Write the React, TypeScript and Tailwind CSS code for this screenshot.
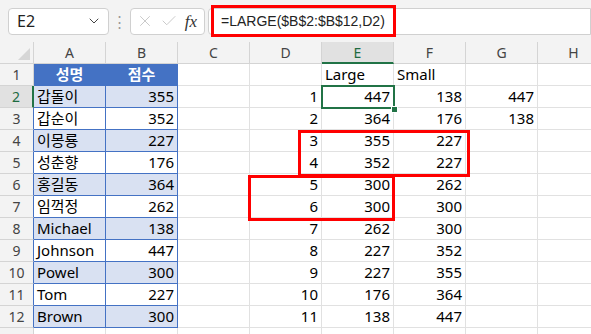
import { ChevronDown, X, Check } from "lucide-react";

const rows = [
  { n: 1, a: "성명", b: "점수", d: "", e: "Large", f: "Small", g: "" },
  { n: 2, a: "갑돌이", b: "355", d: "1", e: "447", f: "138", g: "447" },
  { n: 3, a: "갑순이", b: "352", d: "2", e: "364", f: "176", g: "138" },
  { n: 4, a: "이몽룡", b: "227", d: "3", e: "355", f: "227", g: "" },
  { n: 5, a: "성춘향", b: "176", d: "4", e: "352", f: "227", g: "" },
  { n: 6, a: "홍길동", b: "364", d: "5", e: "300", f: "262", g: "" },
  { n: 7, a: "임꺽정", b: "262", d: "6", e: "300", f: "300", g: "" },
  { n: 8, a: "Michael", b: "138", d: "7", e: "262", f: "300", g: "" },
  { n: 9, a: "Johnson", b: "447", d: "8", e: "227", f: "352", g: "" },
  { n: 10, a: "Powel", b: "300", d: "9", e: "227", f: "355", g: "" },
  { n: 11, a: "Tom", b: "227", d: "10", e: "176", f: "364", g: "" },
  { n: 12, a: "Brown", b: "300", d: "11", e: "138", f: "447", g: "" },
];

const cols = ["A", "B", "C", "D", "E", "F", "G", "H"];

function Cell({ children, className }: { children?: React.ReactNode; className: string }) {
  return (
    <div className={`w-[72px] shrink-0 h-full flex items-center px-[3px] border-r border-b whitespace-nowrap overflow-hidden ${className}`}>
      {children}
    </div>
  );
}

export default function App() {
  return (
    <div
      className="relative w-[591px] h-[334px] overflow-hidden bg-white text-black"
      style={{ fontFamily: '"Segoe UI", "Noto Sans", "Noto Sans CJK KR", sans-serif' }}
    >
      {/* formula bar */}
      <div className="h-[42px] bg-[#f3f3f3] flex items-center gap-0 pl-[8px]">
        <div className="w-[101px] h-[27px] bg-white border border-[#d0d0d0] rounded-[4px] flex items-center justify-between pl-[8px] pr-[6px]">
          <span className="text-[16px] text-[#222]">E2</span>
          <ChevronDown size={16} strokeWidth={1.5} className="text-[#444]" />
        </div>
        <div className="w-[21px] flex justify-center text-[#999] text-[15px] leading-none">⋮</div>
        <div className="w-[75px] h-[27px] bg-white border border-[#d0d0d0] rounded-[4px] flex items-center justify-between pl-[5px] pr-[7px]">
          <X size={18} strokeWidth={1.2} className="text-[#c4c4c4]" />
          <Check size={18} strokeWidth={1.2} className="text-[#c4c4c4]" />
          <span
            className="italic text-[17px] text-[#333] leading-none"
            style={{ fontFamily: '"Liberation Serif", serif' }}
          >
            fx
          </span>
        </div>
        <div
          className="ml-[3px] flex-1 h-[27px] bg-white border border-[#d0d0d0] rounded-l-[4px] flex items-center pl-[12px] text-[14px] text-[#222]"
          style={{ fontFamily: '"Liberation Sans", Arial, sans-serif' }}
        >
          =LARGE($B$2:$B$12,D2)
        </div>
      </div>

      {/* column header row */}
      <div className="flex h-[22px] bg-[#f3f3f3]">
        <div className="relative w-[34px] shrink-0 h-full border-r border-b border-[#d4d4d4]">
          <div className="absolute right-[3px] bottom-[3px] w-0 h-0 border-l-[12px] border-l-transparent border-b-[12px] border-b-[#d6d6d6]" />
        </div>
        {cols.map((c) => (
          <div
            key={c}
            className={
              c === "E"
                ? "w-[72px] shrink-0 h-full flex items-center justify-center text-[14px] text-[#1e6b41] bg-[#e1e1e1] border-r border-[#d4d4d4] border-b-2 border-b-[#217346]"
                : "w-[72px] shrink-0 h-full flex items-center justify-center text-[14px] text-[#444] border-r border-b border-[#d4d4d4]"
            }
          >
            {c}
          </div>
        ))}
      </div>

      {/* rows */}
      {rows.map((r) => {
        const head = r.n === 1;
        const alt = r.n % 2 === 0;
        const tbl = head
          ? "bg-[#4472c4] border-[#4472c4] text-white font-bold justify-center"
          : alt
          ? "bg-[#d9e1f2] border-[#4472c4]"
          : "bg-white border-[#4472c4]";
        return (
          <div key={r.n} className="flex h-[22px] text-[15px]">
            <div
              className={
                r.n === 2
                  ? "w-[34px] shrink-0 h-full flex items-center justify-center text-[14px] text-[#1e6b41] bg-[#e1e1e1] border-b border-[#d4d4d4] border-r-2 border-r-[#217346]"
                  : r.n === 1
                  ? "w-[34px] shrink-0 h-full flex items-center justify-center text-[14px] text-[#444] bg-[#f3f3f3] border-b border-[#d4d4d4] border-r border-r-[#d4d4d4]"
                  : "w-[34px] shrink-0 h-full flex items-center justify-center text-[14px] text-[#444] bg-[#f3f3f3] border-b border-[#d4d4d4] border-r border-r-[#4472c4]"
              }
            >
              {r.n}
            </div>
            <Cell className={tbl}>{r.a}</Cell>
            <Cell className={`${tbl} ${head ? "" : "justify-end"}`}>{r.b}</Cell>
            <Cell className="border-[#e1e1e1]" />
            <Cell className="border-[#e1e1e1] justify-end">{r.d}</Cell>
            <Cell className="border-[#e1e1e1] justify-end">{head ? <span className="mr-auto">{r.e}</span> : r.e}</Cell>
            <Cell className="border-[#e1e1e1] justify-end">{head ? <span className="mr-auto">{r.f}</span> : r.f}</Cell>
            <Cell className="border-[#e1e1e1] justify-end">{r.g}</Cell>
            <Cell className="border-[#e1e1e1]" />
          </div>
        );
      })}
      <div className="flex h-[22px]">
        <div className="w-[34px] shrink-0 h-full bg-[#f3f3f3] border-r border-[#d4d4d4]" />
        {cols.map((c) => (
          <div key={c} className="w-[72px] shrink-0 h-full border-r border-[#e1e1e1]" />
        ))}
      </div>

      {/* selection E2 */}
      <div className="absolute left-[321px] top-[85px] w-[74px] h-[24px] border-2 border-[#217346]" />
      <div className="absolute left-[391px] top-[106px] w-[7px] h-[7px] bg-[#217346] border border-white" />

      {/* red annotation boxes */}
      <div className="absolute left-[211px] top-[5px] w-[185px] h-[32px] border-[3px] border-[#ff0000]" />
      <div className="absolute left-[298px] top-[130px] w-[172px] h-[47px] border-[3px] border-[#ff0000]" />
      <div className="absolute left-[248px] top-[175px] w-[147px] h-[46px] border-[3px] border-[#ff0000]" />
    </div>
  );
}
